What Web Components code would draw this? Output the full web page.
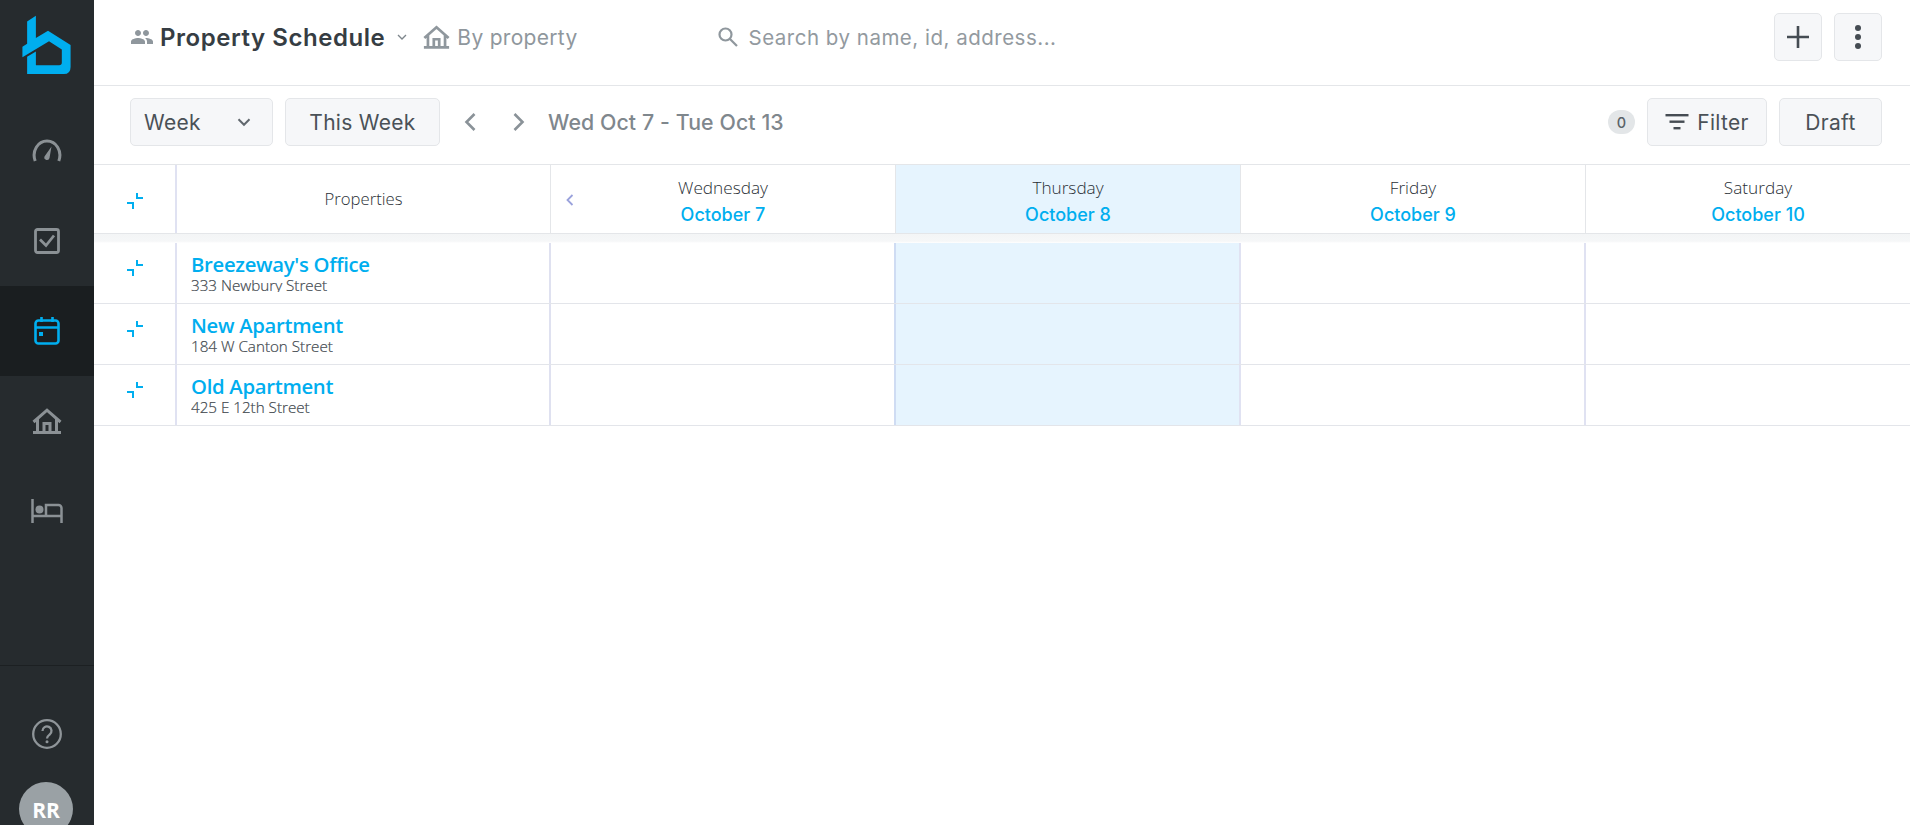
<!DOCTYPE html>
<html><head><meta charset="utf-8">
<style>
html,body{margin:0;padding:0;height:825px;overflow:hidden;background:#fff}
body{font-family:Inter,"Liberation Sans",sans-serif}
</style></head><body>
<app-shell>
  <side-nav slot="nav"></side-nav>
  <top-bar></top-bar>
  <tool-bar></tool-bar>
  <sched-grid></sched-grid>
</app-shell>
<script>
function def(name, html){
  customElements.define(name, class extends HTMLElement{
    connectedCallback(){
      if(this.shadowRoot) return;
      const r=this.attachShadow({mode:'open'});
      r.innerHTML = typeof html==='function' ? html(this) : html;
    }
  });
}
const ICON={
 people:'<svg width="24" height="24" viewBox="0 0 24 24" fill="#8f979d"><path d="M16 11c1.66 0 2.99-1.34 2.99-3S17.66 5 16 5s-3 1.34-3 3 1.34 3 3 3zm-8 0c1.66 0 2.99-1.34 2.99-3S9.66 5 8 5 5 6.34 5 8s1.34 3 3 3zm0 2c-2.33 0-7 1.17-7 3.5V19h14v-2.5C15 14.17 10.33 13 8 13zm8 0c-.29 0-.62.02-.97.05 1.16.84 1.97 1.97 1.97 3.45V19h6v-2.5c0-2.33-4.67-3.5-7-3.5z"/></svg>',
 home:(c,w,h)=>`<svg width="${w}" height="${h}" viewBox="0 0 30 26" fill="none" stroke="${c}" stroke-width="3"><path d="M1.5 14L15 2.200 28.500 14M5.500 11v13M24.500 11v13M1 24.500h28"/><path d="M12 24v-8.500h6V24" stroke-width="3"/></svg>`,
 chev:(c,s,w)=>`<svg width="${s}" height="${s}" viewBox="0 0 24 24" fill="none" stroke="${c}" stroke-width="${w}"><path d="M6 9l6 6 6-6"/></svg>`,
 collapse:'<svg width="18" height="18" viewBox="0 0 18 18" fill="none" stroke="#00aeef" stroke-width="2"><path d="M11 0v5h6M1 10h6v6"/></svg>'
};
def('app-shell',`<style>
:host{display:flex;width:1910px;height:825px;overflow:hidden}
.main{flex:1;min-width:0;display:flex;flex-direction:column}
</style><slot name="nav"></slot><div class="main"><slot></slot></div>`);

def('nav-item',`<style>
:host{display:flex;align-items:center;justify-content:center;height:90px;flex:none}
:host([active]){background:#1a1e20}
</style><slot></slot>`);

def('side-nav',`<style>
:host{display:flex;flex-direction:column;width:94px;height:825px;flex:none;background:#262b2e;overflow:hidden}
.logo{height:106px;flex:none;display:flex;justify-content:center;align-items:flex-start}
.logo svg{margin-top:13px}
.sp{flex:1}
.foot{flex:none;border-top:1px solid #1c2022;display:flex;flex-direction:column;align-items:center;padding-top:53px;height:160px;box-sizing:border-box}
.av{flex:none;width:54px;height:54px;border-radius:50%;background:#9aa1a5;color:#fff;font:700 21px "Open Sans",sans-serif;display:flex;align-items:center;justify-content:center;margin:33px 2px 0 0;padding-top:2px;box-sizing:border-box}
svg{display:block;flex:none}
</style>
<div class="logo"><svg width="54" height="64" viewBox="60 40 160 190"><path fill="#00aeef" d="M81 65L107 48V114L143 93L210 135V200Q210 221 190 221H81V170L107 154V195H176Q184 195 184 187V148L146 124L67 171V140L81 131Z"/></svg></div>
<nav-item><svg width="30" height="24" viewBox="0 0 30 24" fill="none" stroke="#8b9195" stroke-width="3"><path d="M3.200 22C-.5 12 6 2 15 2s15.500 10 11.800 20"/><path fill="#8b9195" stroke="none" d="M19.500 7.500L17.500 19a2.600 2.600 0 1 1-5-1.400z"/></svg></nav-item>
<nav-item><svg width="26" height="26" viewBox="0 0 26 26" fill="none" stroke="#8b9195" stroke-width="2.800"><rect x="1.500" y="1.500" width="23" height="23" rx="2"/><path d="M6 11.500l6 6 8-10"/></svg></nav-item>
<nav-item active><svg width="26" height="28" viewBox="0 0 26 28" fill="none" stroke="#00aeef" stroke-width="2.600"><rect x="1.500" y="3.500" width="23" height="23" rx="3"/><path d="M1.500 10.500h23M7.500 0v5M18.500 0v5"/><rect x="5" y="15" width="4" height="4" fill="#00aeef" stroke="none"/></svg></nav-item>
<nav-item>${ICON.home('#8b9195',30,26)}</nav-item>
<nav-item><svg width="32" height="24" viewBox="0 0 32 24" fill="none" stroke="#8b9195" stroke-width="2.500"><path d="M1.500 0v24M30.500 24V9a3 3 0 0 0-3-3H15v11M1.500 17h29"/><circle cx="8.500" cy="10.500" r="4" fill="#8b9195" stroke="none"/></svg></nav-item>
<div class="sp"></div>
<div class="foot"><svg width="30" height="30" viewBox="0 0 30 30" fill="none" stroke="#8f9599" stroke-width="2.300"><circle cx="15" cy="15" r="13.800"/><path d="M10.500 12a4.500 4.500 0 1 1 7.200 3.500C16 16.800 15 17.500 15 19.500"/><circle cx="15" cy="22.700" r="1.500" fill="#8f9599" stroke="none"/></svg><div class="av">RR</div></div>`);

def('ui-btn',`<style>
:host{display:inline-flex;align-items:center;justify-content:center;box-sizing:border-box;height:48px;background:#f6f7f9;border:1px solid #e4e6e9;border-radius:5px;color:#4a5157;font:400 21px Inter,sans-serif;flex:none;letter-spacing:.3px}
</style><slot></slot>`);

def('top-bar',`<style>
:host{display:flex;align-items:center;box-sizing:border-box;height:86px;border-bottom:1px solid #e4e6e9;padding:0 28px 11px 36px;flex:none;font-family:Inter,sans-serif}
.t{font-weight:600;font-size:24px;color:#363d43;margin-left:6px;letter-spacing:.55px}
.by{font-size:21px;color:#8f979d;margin-left:7px;letter-spacing:.3px}
.s{font-size:20.500px;color:#939a9f;margin-left:10px;letter-spacing:.5px}
.sw{display:flex;align-items:center;margin-left:auto;gap:12px}
svg{display:block;flex:none}
.ch{margin:0 0 0 9px}
.srch{margin-left:139px}
ui-btn{width:48px}
</style>
${ICON.people}<span class="t">Property Schedule</span>
<span class="ch">${ICON.chev('#7e868c',16,2)}</span>
<span style="margin-left:13px">${ICON.home('#8f979d',27,24)}</span><span class="by">By property</span>
<svg class="srch" width="22" height="22" viewBox="0 0 22 22" fill="none" stroke="#8f979d" stroke-width="2.200"><circle cx="8.500" cy="8.500" r="6"/><path d="M13 13l7 7"/></svg><span class="s">Search by name, id, address...</span>
<div class="sw"><ui-btn><svg width="22" height="22" viewBox="0 0 22 22" stroke="#454c53" stroke-width="2.600"><path d="M11 0v22M0 11h22"/></svg></ui-btn><ui-btn><svg width="8" height="26" viewBox="0 0 8 26" fill="#454c53"><circle cx="4" cy="4" r="3"/><circle cx="4" cy="13" r="3"/><circle cx="4" cy="22" r="3"/></svg></ui-btn></div>`);

def('tool-bar',`<style>
:host{display:flex;align-items:center;box-sizing:border-box;height:79px;border-bottom:1px solid #e4e6e9;padding:0 28px 6px 36px;flex:none;font-family:Inter,sans-serif}
svg{display:block;flex:none}
.wk{width:143px;justify-content:space-between;padding:0 17px 0 13px}
.tw{width:155px;margin-left:12px}
.n1{margin-left:24px}
.d{font-weight:500;font-size:21.300px;color:#7f878d;margin-left:23px;letter-spacing:.1px}
.b{margin-left:auto;width:27px;height:24px;border-radius:12px;background:#e3e6e8;color:#5a6268;font-size:14.500px;font-weight:500;display:flex;align-items:center;justify-content:center;margin-right:12px}
.f{width:120px;gap:8px}.dr{width:103px;margin-left:12px}
</style>
<ui-btn class="wk"><span>Week</span>${ICON.chev('#61686e',22,2.200)}</ui-btn>
<ui-btn class="tw">This Week</ui-btn>
<svg class="n1" width="12" height="20" viewBox="0 0 12 20" fill="none" stroke="#8a9298" stroke-width="2.600"><path d="M10.500 2L2.500 10l8 8"/></svg>
<svg width="12" height="20" viewBox="0 0 12 20" fill="none" stroke="#8a9298" stroke-width="2.600" style="margin-left:37px"><path d="M1.500 2l8 8-8 8"/></svg>
<span class="d">Wed Oct 7 - Tue Oct 13</span>
<span class="b">0</span>
<ui-btn class="f"><svg width="24" height="16" viewBox="0 0 24 16" fill="#454c53"><rect width="23" height="2.400" x=".5"/><rect width="15" height="2.400" x="4.500" y="6.500"/><rect width="7" height="2.400" x="8.500" y="13"/></svg><span>Filter</span></ui-btn>
<ui-btn class="dr">Draft</ui-btn>`);

def('day-head',h=>`<style>
:host{display:flex;flex-direction:column;align-items:center;justify-content:center;box-sizing:border-box;height:68px;border-right:1px solid #e4e6e9;font-family:Inter,sans-serif}
:host([today]){background:#e6f4fe}
.a{font:300 17.200px/1 "Open Sans",sans-serif;color:#2a3036;margin-top:5px}
.b{font-weight:500;font-size:18px;line-height:1;color:#00aeef;margin-top:10px}
</style><div class="a">${h.getAttribute('day')}</div><div class="b">${h.getAttribute('date')}</div>`);

def('day-cell',`<style>
:host{display:block;box-sizing:border-box;border-right:2px solid #e0e2f2}
:host([today]){background:#e6f4fe;border-left:2px solid #cfdcf3;margin-left:-2px}
</style>`);

def('sched-row',h=>`<style>
:host{display:grid;grid-template-columns:var(--cols);height:61px;box-sizing:border-box;border-bottom:1px solid #e3e5ea}
.c{border-right:2px solid #e0e2f2;display:flex;justify-content:center;align-items:flex-start;padding-top:17px;box-sizing:border-box}
.p{border-right:2px solid #dfe1f0;padding:8px 0 0 14px;box-sizing:border-box;font-family:"Open Sans",sans-serif;overflow:hidden}
.n{font-weight:600;font-size:20.300px;line-height:26px;color:#00aeef;letter-spacing:-.3px}
.s{font-size:15.200px;line-height:17px;height:14.500px;overflow:hidden;color:#41484e;font-weight:300;-webkit-text-stroke:.2px #41484e}
svg{display:block}
</style><div class="c">${ICON.collapse}</div>
<div class="p"><div class="n">${h.getAttribute('name')}</div><div class="s">${h.getAttribute('addr')}</div></div>
<day-cell></day-cell><day-cell today></day-cell><day-cell></day-cell><day-cell></day-cell>`);

def('sched-grid',`<style>
:host{display:block;flex:1;min-height:0;overflow:hidden;--cols:83px 374px 345px 345px 345px 345px}
.h{display:grid;grid-template-columns:var(--cols);height:69px;box-sizing:border-box;border-bottom:1px solid #e4e6e9}
.c{border-right:2px solid #e0e2f2;display:flex;justify-content:center;align-items:flex-start;padding-top:28px;box-sizing:border-box}
.p{border-right:1px solid #e4e6e9;display:flex;align-items:center;justify-content:center;font:300 16.700px "Open Sans",sans-serif;color:#2a3036;padding-bottom:2px;box-sizing:border-box}
.w{position:relative}
.back{position:absolute;left:14px;top:28px;display:block}
.band{height:9px;background:linear-gradient(#f3f5f6,#f6f7f8 80%,#fff)}
svg{display:block}
</style>
<div class="h"><div class="c">${ICON.collapse}</div><div class="p">Properties</div>
<div class="w"><svg class="back" width="10" height="14" viewBox="0 0 10 14" fill="none" stroke="#9aa2dc" stroke-width="1.800"><path d="M7.500 2L2.500 7l5 5"/></svg><day-head day="Wednesday" date="October 7" style="height:100%"></day-head></div>
<day-head today day="Thursday" date="October 8"></day-head>
<day-head day="Friday" date="October 9"></day-head>
<day-head day="Saturday" date="October 10"></day-head></div>
<div class="band"></div>
<sched-row name="Breezeway's Office" addr="333 Newbury Street"></sched-row>
<sched-row name="New Apartment" addr="184 W Canton Street"></sched-row>
<sched-row name="Old Apartment" addr="425 E 12th Street"></sched-row>`);
</script>
</body></html>
